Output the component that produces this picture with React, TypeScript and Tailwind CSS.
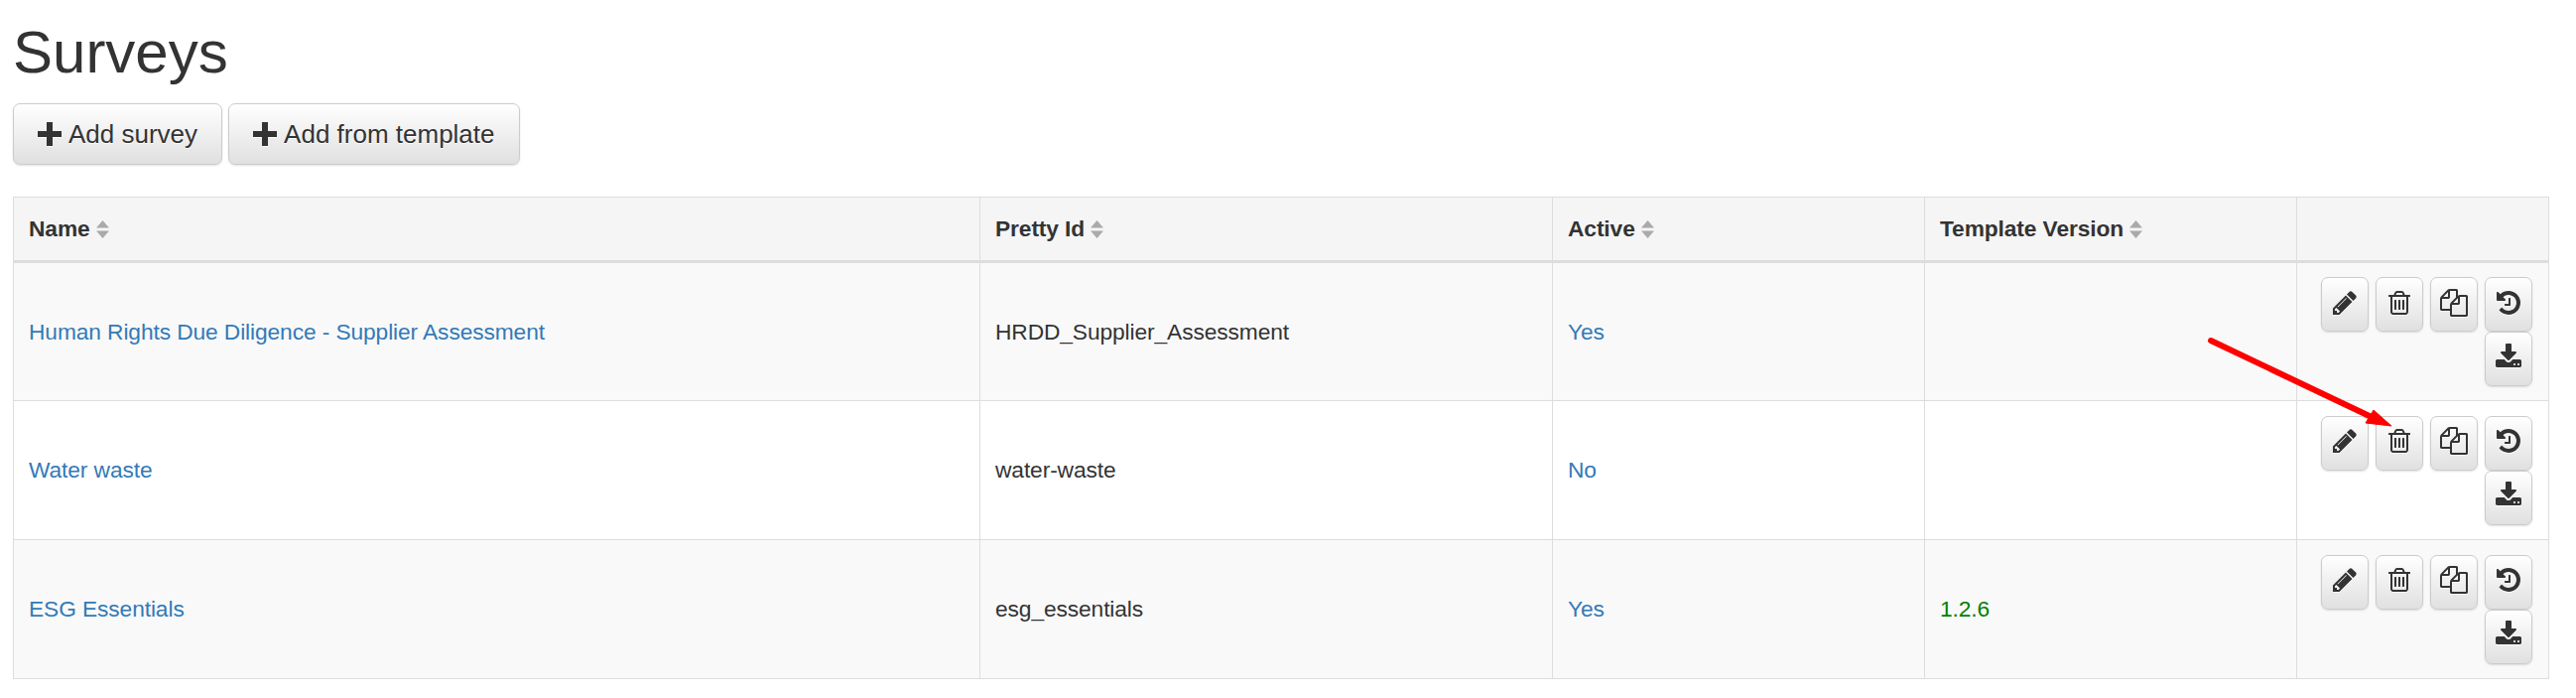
import React from 'react';

const pencil = 'M491 1536l91-91-235-235-91 91v107h128v128h107zm523-928q0-22-22-22-10 0-17 7l-542 542q-7 7-7 17 0 22 22 22 10 0 17-7l542-542q7-7 7-17zm-54-192l416 416-832 832h-416v-416zm683 96q0 53-37 90l-166 166-416-416 166-165q36-38 90-38 53 0 91 38l235 234q37 39 37 91z';
const trash = 'M704 736v576q0 14-9 23t-23 9h-64q-14 0-23-9t-9-23v-576q0-14 9-23t23-9h64q14 0 23 9t9 23zm256 0v576q0 14-9 23t-23 9h-64q-14 0-23-9t-9-23v-576q0-14 9-23t23-9h64q14 0 23 9t9 23zm256 0v576q0 14-9 23t-23 9h-64q-14 0-23-9t-9-23v-576q0-14 9-23t23-9h64q14 0 23 9t9 23zm128 724v-948h-896v948q0 22 7 40.5t14.5 27 10.5 8.5h832q3 0 10.5-8.5t14.5-27 7-40.5zm-672-1076h448l-48-117q-7-9-17-11h-317q-10 2-17 11zm928 32v64q0 14-9 23t-23 9h-96v948q0 83-47 143.5t-113 60.5h-832q-66 0-113-58.5t-47-141.5v-952h-96q-14 0-23-9t-9-23v-64q0-14 9-23t23-9h309l70-167q15-37 54-63t79-26h320q40 0 79 26t54 63l70 167h309q14 0 23 9t9 23z';
const files = 'M1696 384q40 0 68 28t28 68v1216q0 40-28 68t-68 28h-960q-40 0-68-28t-28-68v-288h-544q-40 0-68-28t-28-68v-672q0-40 20-88t48-76l408-408q28-28 76-48t88-20h416q40 0 68 28t28 68v328q68-40 128-40h416zm-544 213l-299 299h299v-299zm-640-384l-299 299h299v-299zm196 647l316-316v-416h-384v416q0 40-28 68t-68 28h-416v640h512v-256q0-40 20-88t48-76zm956 804v-1152h-384v416q0 40-28 68t-68 28h-416v640h896z';
const history = 'M1664 896q0 156-61 298t-164 245-245 164-298 61q-172 0-327-72.5t-264-204.5q-7-10-6.5-22.5t8.5-20.5l137-138q10-9 25-9 16 2 23 12 73 95 179 147t225 52q104 0 198.5-40.5t163.5-109.5 109.5-163.5 40.5-198.5-40.5-198.5-109.5-163.5-163.5-109.5-198.5-40.5q-98 0-188 35.5t-160 101.5l137 138q31 30 14 69-17 40-59 40h-448q-26 0-45-19t-19-45v-448q0-42 40-59 39-17 69 14l130 129q107-101 244.5-156.5t284.5-55.5q156 0 298 61t245 164 164 245 61 298zm-640-288v448q0 14-9 23t-23 9h-320q-14 0-23-9t-9-23v-64q0-14 9-23t23-9h224v-352q0-14 9-23t23-9h64q14 0 23 9t9 23z';
const download = 'M1344 1344q0-26-19-45t-45-19-45 19-19 45 19 45 45 19 45-19 19-45zm256 0q0-26-19-45t-45-19-45 19-19 45 19 45 45 19 45-19 19-45zm128-224v320q0 40-28 68t-68 28h-1472q-40 0-68-28t-28-68v-320q0-40 28-68t68-28h465l135 136q58 56 136 56t136-56l136-136h464q40 0 68 28t28 68zm-325-569q17 41-14 70l-448 448q-18 19-45 19t-45-19l-448-448q-31-29-14-70 17-39 59-39h256v-448q0-26 19-45t45-19h256q26 0 45 19t19 45v448h256q42 0 59 39z';

function Glyph({ d, size = 28 }: { d: string; size?: number }) {
    return (
        <svg
            viewBox="0 0 1792 1792"
            width={size}
            height={size}
            fill="currentColor"
            className="[filter:drop-shadow(0_1px_0_#fff)]"
        >
            <path d={d} />
        </svg>
    );
}

function Plus() {
    return (
        <svg viewBox="0 0 24 24" width={24} height={24} fill="#333" className="[filter:drop-shadow(0_1px_0_#fff)]">
            <path d="M9 0h6v9h9v6h-9v9H9v-9H0V9h9z" />
        </svg>
    );
}

function SortIcon() {
    return (
        <svg viewBox="0 0 13 18" width={13} height={18} fill="#aaaaaa" className="ml-[6px] shrink-0">
            <path d="M6.5 0l6.5 7.5H0zM0 10.5h13L6.5 18z" />
        </svg>
    );
}

function IconButton({ d, size }: { d: string; size?: number }) {
    return (
        <button className="flex h-[55px] w-[48px] items-center justify-center rounded-[7px] border border-[#ccc] bg-gradient-to-b from-white to-[#e0e0e0] pb-[4px] text-[#333] shadow-[0_1px_2px_rgba(0,0,0,0.12)]">
            <Glyph d={d} size={size} />
        </button>
    );
}

function Actions() {
    return (
        <div className="flex flex-wrap justify-end gap-x-[7px]">
            <IconButton d={pencil} />
            <IconButton d={trash} />
            <IconButton d={files} />
            <IconButton d={history} />
            <IconButton d={download} />
        </div>
    );
}

function AddButton({ label }: { label: string }) {
    return (
        <button className="flex h-[62px] items-center gap-[7px] rounded-[7px] border border-[#ccc] bg-gradient-to-b from-white to-[#e0e0e0] px-[24px] text-[26px] text-[#333] shadow-[0_1px_2px_rgba(0,0,0,0.12)] [text-shadow:0_1px_0_#fff]">
            <Plus />
            {label}
        </button>
    );
}

const headers = ['Name', 'Pretty Id', 'Active', 'Template Version'];

const rows = [
    { name: 'Human Rights Due Diligence - Supplier Assessment', prettyId: 'HRDD_Supplier_Assessment', active: 'Yes', version: '' },
    { name: 'Water waste', prettyId: 'water-waste', active: 'No', version: '' },
    { name: 'ESG Essentials', prettyId: 'esg_essentials', active: 'Yes', version: '1.2.6' },
];

export default function App() {
    return (
        <div className="relative min-h-[703px] bg-white px-[13px] font-['Liberation_Sans',Arial,sans-serif] text-[22.75px] tracking-[-0.1px] text-[#333]">
            <h1 className="pt-[18px] text-[60px] leading-[69px] font-normal tracking-normal">Surveys</h1>

            <div className="mt-[17px] flex gap-[6px] tracking-normal">
                <AddButton label="Add survey" />
                <AddButton label="Add from template" />
            </div>

            <table className="mt-[32px] w-[2555px] table-fixed border-collapse border border-[#ddd]">
                <colgroup>
                    <col className="w-[974px]" />
                    <col className="w-[577px]" />
                    <col className="w-[375px]" />
                    <col className="w-[375px]" />
                    <col className="w-[254px]" />
                </colgroup>
                <thead>
                    <tr className="h-[65px] bg-[#f5f5f5]">
                        {headers.map((h) => (
                            <th key={h} className="border border-b-[3px] border-[#ddd] px-[15px] text-left font-bold">
                                <span className="flex items-center">
                                    {h}
                                    <SortIcon />
                                </span>
                            </th>
                        ))}
                        <th className="border border-b-[3px] border-[#ddd]"></th>
                    </tr>
                </thead>
                <tbody>
                    {rows.map((row, i) => (
                        <tr key={row.name} className={`h-[140px] ${i % 2 === 0 ? 'bg-[#f9f9f9]' : 'bg-white'}`}>
                            <td className="border border-[#ddd] px-[15px]">
                                <a className="text-[#337ab7]">{row.name}</a>
                            </td>
                            <td className="border border-[#ddd] px-[15px]">{row.prettyId}</td>
                            <td className="border border-[#ddd] px-[15px]">
                                <a className="text-[#337ab7]">{row.active}</a>
                            </td>
                            <td className="border border-[#ddd] px-[15px] text-[#008000]">{row.version}</td>
                            <td className="border border-[#ddd] px-[16px]">
                                <Actions />
                            </td>
                        </tr>
                    ))}
                </tbody>
            </table>

            {/* annotation arrow */}
            <svg className="absolute top-0 left-0" width={2596} height={703} fill="none">
                <path d="M2228 343L2392 421" stroke="#f00" strokeWidth={6} strokeLinecap="round" />
                <path d="M2410 429L2384 426L2392 413Z" fill="#f00" stroke="#f00" strokeWidth={1} />
            </svg>
        </div>
    );
}
